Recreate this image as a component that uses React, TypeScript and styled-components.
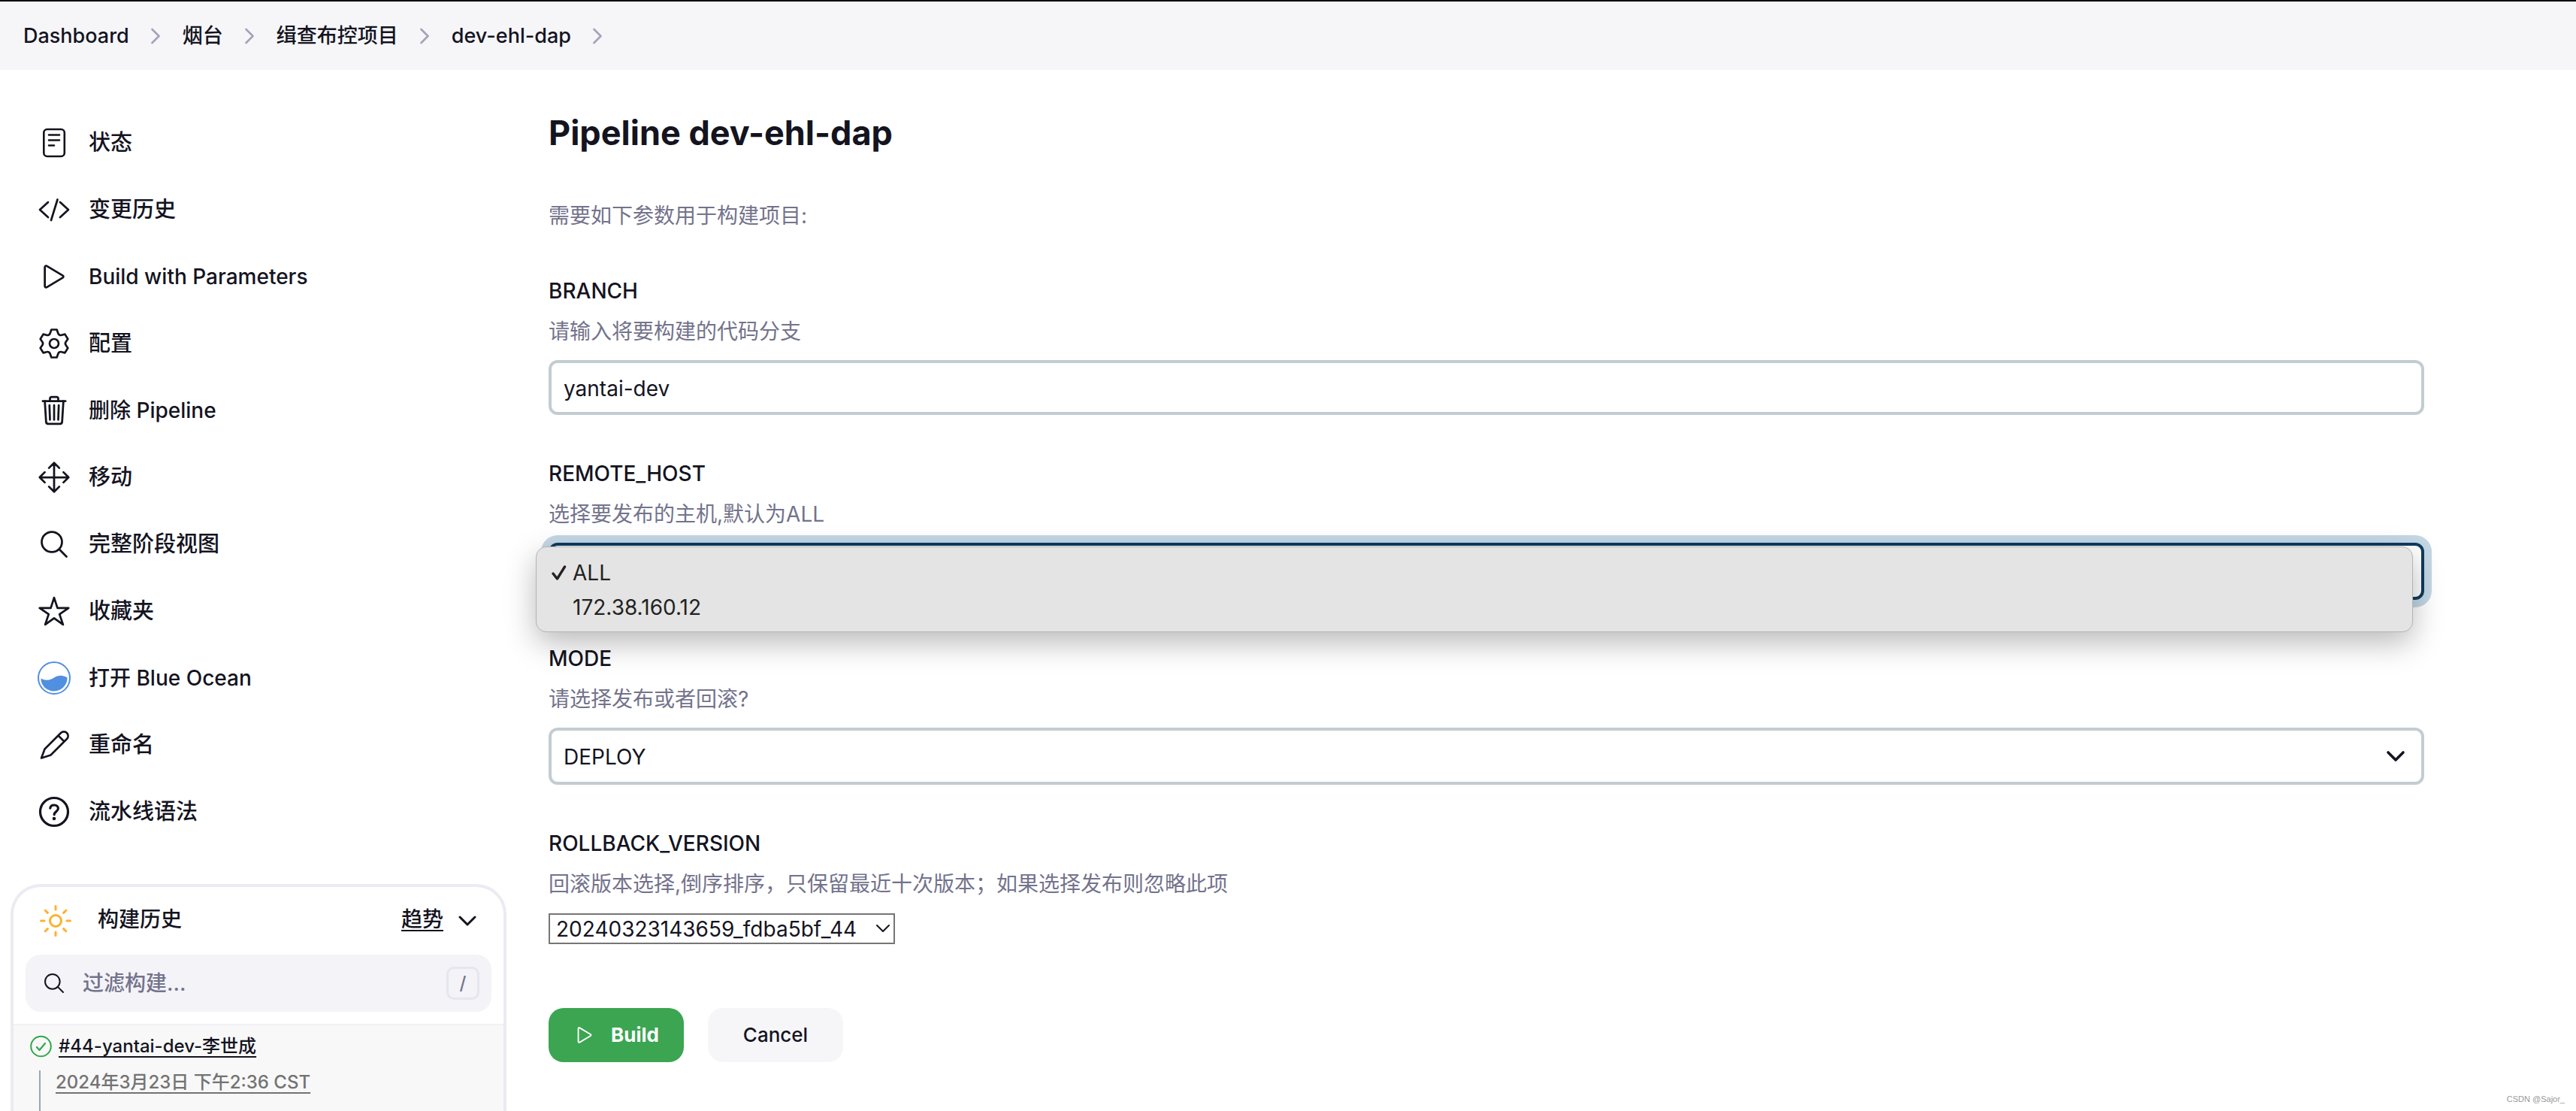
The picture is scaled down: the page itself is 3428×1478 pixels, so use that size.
import React, { useState } from 'react';
import styled, { createGlobalStyle } from 'styled-components';
import {
  IoPlayOutline,
  IoTrashOutline,
  IoMoveOutline,
  IoSearchOutline,
  IoStarOutline,
  IoSunnyOutline,
} from 'react-icons/io5';

const ink = '#14141f';
const muted = '#73738c';
const fontStack = '"Inter", "Noto Sans CJK SC", sans-serif';

const GlobalStyle = createGlobalStyle`
  *, *::before, *::after { box-sizing: border-box; }
  body {
    margin: 0;
    background: #fff;
    color: ${ink};
    font-family: ${fontStack};
    font-size: 28px;
    line-height: 40px;
  }
  button, input, select { font: inherit; color: inherit; }
  a { color: inherit; }
`;

const Page = styled.div`
  display: flex;
  flex-direction: column;
  min-height: 100vh;
  border-top: 2px solid #000;
`;

const Breadcrumbs = styled.nav`
  background: #f6f6f9;
  padding: 0 31px;
`;

const CrumbList = styled.ol`
  display: flex;
  align-items: center;
  gap: 30px;
  height: 91px;
  margin: 0;
  padding: 0;
  list-style: none;
`;

const Crumb = styled.li`
  display: flex;
  align-items: center;
  gap: 29px;
`;

const CrumbLink = styled.a`
  font-size: 27px;
  font-weight: 500;
  text-decoration: none;
`;

const Body = styled.div`
  display: flex;
  flex: 1;
`;

const Sidebar = styled.aside`
  display: flex;
  flex-direction: column;
  flex: none;
  width: 674px;
  padding: 52px 0 0 14px;
`;

const TaskList = styled.ul`
  margin: 0 0 52px;
  padding: 0;
  list-style: none;
`;

const TaskLink = styled.a<{ $latin: boolean }>`
  display: flex;
  align-items: center;
  gap: 24px;
  height: 89px;
  padding-left: 36px;
  font-size: ${(p) => (p.$latin ? 28 : 29)}px;
  font-weight: 500;
  text-decoration: none;

  svg { flex: none; width: 44px; height: 44px; }
`;

const History = styled.section`
  display: flex;
  flex-direction: column;
  flex: 1;
  border: 4px solid #ebebf3;
  border-bottom: 0;
  border-radius: 40px 40px 0 0;
  overflow: hidden;
`;

const HistoryHead = styled.header`
  display: flex;
  align-items: center;
  height: 90px;
  padding: 0 36px 0 32px;

  > svg:first-child { margin-right: 32px; }
`;

const HistoryTitle = styled.h2`
  flex: 1;
  margin: 0;
  padding-bottom: 4px;
  font-size: 28px;
  font-weight: 500;
`;

const TrendLink = styled.a`
  margin-right: 20px;
  padding-bottom: 4px;
  font-weight: 500;
  text-decoration-thickness: 2px;
  text-underline-offset: 4px;
`;

const IconButton = styled.button`
  display: flex;
  padding: 0;
  border: 0;
  background: none;
`;

const SearchBox = styled.label`
  display: flex;
  align-items: center;
  gap: 22px;
  height: 76px;
  margin: 0 16px 16px;
  padding: 0 16px 0 22px;
  border-radius: 20px;
  background: #f3f3f8;

  svg { flex: none; }
`;

const SearchInput = styled.input`
  flex: 1;
  min-width: 0;
  padding: 0;
  border: 0;
  outline: 0;
  background: none;
  font-weight: 500;

  &::placeholder { color: ${muted}; opacity: 1; }
`;

const Key = styled.kbd`
  display: flex;
  align-items: center;
  justify-content: center;
  width: 44px;
  height: 44px;
  border: 3px solid #e6e6ef;
  border-radius: 10px;
  color: ${muted};
  font-family: ${fontStack};
  font-size: 24px;
  font-weight: 500;
`;

const Builds = styled.div`
  display: flex;
  flex-direction: column;
  flex: 1;
  padding: 12px 22px 0;
  border-top: 2px solid #f1f1f6;
  background: #f8f8f8;
  font-size: 24px;
`;

const BuildRow = styled.div`
  display: flex;
  align-items: center;
  gap: 8px;
  height: 32px;
`;

const BuildLink = styled.a<{ $muted?: boolean }>`
  color: ${(p) => (p.$muted ? '#737373' : ink)};
  font-weight: 500;
  line-height: 32px;
  text-decoration-thickness: 2px;
  text-underline-offset: 5px;
`;

const BuildDetails = styled.div`
  flex: 1;
  margin: 16px 0 0 12px;
  padding: 0 0 12px 20px;
  border-left: 2px solid #98a6b0;
  line-height: 24px;
`;

const Main = styled.main`
  flex: 1;
  min-width: 0;
  padding: 54px 202px 0 56px;
`;

const Title = styled.h1`
  margin: 0 0 60px;
  font-size: 45px;
  font-weight: 700;
  line-height: 60px;
`;

const Hint = styled.p`
  margin: 0;
  color: ${muted};
`;

const Form = styled.form`
  padding-top: 60px;
`;

const Field = styled.div`
  margin-bottom: 58px;
`;

const FieldLabel = styled.label`
  display: block;
  margin-bottom: 14px;
  font-weight: 500;
`;

const TextInput = styled.input`
  display: block;
  width: 100%;
  height: 73px;
  margin-top: 18px;
  padding: 2px 16px 0;
  border: 4px solid #c3ccd1;
  border-radius: 12px;
  background: #fff;
`;

const SelectWrap = styled.div`
  position: relative;
  margin-top: 18px;
`;

const Select = styled.select<{ $open?: boolean }>`
  display: block;
  appearance: none;
  width: 100%;
  height: 76px;
  padding: 2px 60px 0 16px;
  border: 4px solid ${(p) => (p.$open ? '#0d3c5f' : '#c3ccd1')};
  border-radius: 12px;
  outline: 0;
  background: #fff;
  box-shadow: ${(p) => (p.$open ? '0 0 0 10px #c4d7e5' : 'none')};
`;

const SelectArrow = styled.svg`
  position: absolute;
  top: 50%;
  right: 24px;
  transform: translateY(-50%);
  pointer-events: none;
`;

const Menu = styled.ul`
  position: absolute;
  z-index: 1;
  top: 5px;
  left: -17px;
  right: 15px;
  margin: 0;
  padding: 11px 18px 9px;
  border: 1px solid #b4b4b4;
  border-radius: 14px;
  background: #e4e4e4;
  box-shadow: 0 14px 40px rgba(0, 0, 0, 0.28);
  color: #222;
  list-style: none;
`;

const MenuItem = styled.li`
  display: flex;
  align-items: center;
  gap: 6px;
  height: 46px;

  svg { width: 24px; height: 24px; }
`;

const CompactWrap = styled.div`
  position: relative;
  width: max-content;
  margin-top: 19px;
`;

const CompactSelect = styled.select`
  display: block;
  appearance: none;
  height: 41px;
  padding: 0 48px 0 8px;
  border: 2px solid #767676;
  border-radius: 0;
  background: #fff;
  line-height: 36px;
`;

const CompactArrow = styled.svg`
  position: absolute;
  top: 14px;
  right: 6px;
  pointer-events: none;
`;

const Actions = styled.div`
  display: flex;
  gap: 32px;
  margin-top: 85px;
`;

const Button = styled.button<{ $primary?: boolean }>`
  display: flex;
  align-items: center;
  justify-content: center;
  gap: 20px;
  width: 180px;
  height: 72px;
  padding: 0;
  border: 0;
  border-radius: 20px;
  background: ${(p) => (p.$primary ? '#3ba551' : '#f6f6f9')};
  color: ${(p) => (p.$primary ? '#fff' : ink)};
  font-size: 26px;
  font-weight: ${(p) => (p.$primary ? 700 : 500)};
`;

const Watermark = styled.small`
  position: absolute;
  right: 15px;
  bottom: 8px;
  color: #999;
  font-family: "Liberation Sans", sans-serif;
  font-size: 11px;
  line-height: 16px;
`;

const stroke = {
  fill: 'none',
  stroke: 'currentColor',
  strokeLinecap: 'round' as const,
  strokeLinejoin: 'round' as const,
};

const DocumentIcon = () => (
  <svg viewBox="0 0 44 44" {...stroke} strokeWidth="2.600">
    <rect x="8.300" y="4" width="27.500" height="36" rx="4.500" />
    <path d="M15 11.500h14M15 18.500h14M15 25.500h7" />
  </svg>
);

const CodeIcon = () => (
  <svg viewBox="0 0 44 44" {...stroke} strokeWidth="2.700">
    <path d="M14 12L3 22L14 32M30 12L41 22L30 32M26.500 8.500L18 36" />
  </svg>
);

const GearIcon = () => (
  <svg viewBox="0 0 44 44" {...stroke} strokeWidth="2.700">
    <circle cx="22" cy="22" r="6" />
    <path d="M18.400 3.500h7.200l1.700 4.700a3.600 3.600 0 0 0 4.700 2.600l4.400-1.200 3.900 6.400-2.600 3.700a4 4 0 0 0 0 4.600l2.600 3.700-3.900 6.400-4.400-1.200a3.600 3.600 0 0 0-4.700 2.600l-1.700 4.700h-7.200l-1.700-4.700a3.600 3.600 0 0 0-4.700-2.600l-4.400 1.200-3.900-6.400 2.600-3.700a4 4 0 0 0 0-4.600l-2.600-3.700 3.900-6.400 4.400 1.200a3.600 3.600 0 0 0 4.700-2.600z" />
  </svg>
);

const OceanIcon = () => (
  <svg viewBox="0 0 44 44" fill="none">
    <circle cx="22" cy="22" r="21" stroke="#5190e0" strokeWidth="2" />
    <path fill="#5190e0" d="M4.500 22.500C11 26 17 25 22 21.500C28 17.500 34 18 39.500 21.500C40 31 32 39.500 22 39.500S4 31.500 4.500 22.500Z" />
  </svg>
);

const PencilIcon = () => (
  <svg viewBox="0 0 44 44" {...stroke} strokeWidth="2.600">
    <path d="M5 39.500l4.500-12L31 6a5.600 5.600 0 0 1 8 8L17.500 35.500zM27.500 9.500l7.500 7.500" />
  </svg>
);

const HelpIcon = () => (
  <svg viewBox="0 0 44 44" {...stroke} strokeWidth="3.200">
    <circle cx="22" cy="22" r="18.500" />
    <path d="M16.800 17.200c.3-3 2.600-4.200 5.300-4.200 3 0 5.300 1.800 5.300 4.500 0 4.200-5.200 4.400-5.200 7.800v.4" />
    <circle cx="22" cy="31" r="2.300" fill="currentColor" stroke="none" />
  </svg>
);

const CrumbArrow = () => (
  <svg width="12" height="22" viewBox="0 0 12 22" {...stroke} stroke="#a3a3bb" strokeWidth="2.600">
    <path d="M1.500 2L10.500 11L1.500 20" />
  </svg>
);

const CheckCircle = () => (
  <svg width="30" height="30" viewBox="0 0 30 30" {...stroke} stroke="#30a84b" strokeWidth="2">
    <circle cx="14.500" cy="15" r="13.300" />
    <path d="M9 16l3.500 4L20 11" strokeWidth="2.200" />
  </svg>
);

const crumbs = ['Dashboard', '烟台', '缉查布控项目', 'dev-ehl-dap'];

const tasks: { label: string; icon: React.ReactNode }[] = [
  { label: '状态', icon: <DocumentIcon /> },
  { label: '变更历史', icon: <CodeIcon /> },
  { label: 'Build with Parameters', icon: <IoPlayOutline /> },
  { label: '配置', icon: <GearIcon /> },
  { label: '删除 Pipeline', icon: <IoTrashOutline /> },
  { label: '移动', icon: <IoMoveOutline /> },
  { label: '完整阶段视图', icon: <IoSearchOutline /> },
  { label: '收藏夹', icon: <IoStarOutline /> },
  { label: '打开 Blue Ocean', icon: <OceanIcon /> },
  { label: '重命名', icon: <PencilIcon /> },
  { label: '流水线语法', icon: <HelpIcon /> },
];

const hosts = ['ALL', '172.38.160.12'];

export default function App() {
  const [host, setHost] = useState(hosts[0]);
  const [branch, setBranch] = useState('yantai-dev');

  return (
    <Page>
      <GlobalStyle />
      <Breadcrumbs>
        <CrumbList>
          {crumbs.map((c) => (
            <Crumb key={c}>
              <CrumbLink href="#">{c}</CrumbLink>
              <CrumbArrow />
            </Crumb>
          ))}
        </CrumbList>
      </Breadcrumbs>
      <Body>
        <Sidebar>
          <TaskList>
            {tasks.map((t) => (
              <li key={t.label}>
                <TaskLink href="#" $latin={/[a-z]/i.test(t.label)}>
                  {t.icon}
                  {t.label}
                </TaskLink>
              </li>
            ))}
          </TaskList>
          <History>
            <HistoryHead>
              <IoSunnyOutline size={48} color="#fdb12e" />
              <HistoryTitle>构建历史</HistoryTitle>
              <TrendLink href="#">趋势</TrendLink>
              <IconButton type="button" aria-label="折叠">
                <svg width="24" height="14" viewBox="0 0 24 14" {...stroke} strokeWidth="3">
                  <path d="M2 2L12 12L22 2" />
                </svg>
              </IconButton>
            </HistoryHead>
            <SearchBox>
              <IoSearchOutline size={32} />
              <SearchInput type="text" placeholder="过滤构建..." aria-label="过滤构建" />
              <Key>/</Key>
            </SearchBox>
            <Builds>
              <BuildRow>
                <CheckCircle />
                <BuildLink href="#">#44-yantai-dev-李世成</BuildLink>
              </BuildRow>
              <BuildDetails>
                <BuildLink href="#" $muted>2024年3月23日 下午2:36 CST</BuildLink>
              </BuildDetails>
            </Builds>
          </History>
        </Sidebar>
        <Main>
          <Title>Pipeline dev-ehl-dap</Title>
          <Hint>需要如下参数用于构建项目:</Hint>
          <Form onSubmit={(e) => e.preventDefault()}>
            <Field>
              <FieldLabel htmlFor="branch">BRANCH</FieldLabel>
              <Hint>请输入将要构建的代码分支</Hint>
              <TextInput id="branch" value={branch} onChange={(e) => setBranch(e.target.value)} />
            </Field>
            <Field>
              <FieldLabel htmlFor="host">REMOTE_HOST</FieldLabel>
              <Hint>选择要发布的主机,默认为ALL</Hint>
              <SelectWrap>
                <Select id="host" $open value={host} onChange={(e) => setHost(e.target.value)}>
                  {hosts.map((h) => <option key={h}>{h}</option>)}
                </Select>
                <Menu role="listbox" aria-label="REMOTE_HOST">
                  {hosts.map((h) => (
                    <MenuItem key={h} role="option" aria-selected={h === host} onClick={() => setHost(h)}>
                      <svg viewBox="0 0 24 24" {...stroke} strokeWidth="3.400">
                        {h === host && <path d="M4 13l5.500 7L19.500 4" />}
                      </svg>
                      {h}
                    </MenuItem>
                  ))}
                </Menu>
              </SelectWrap>
            </Field>
            <Field>
              <FieldLabel htmlFor="mode">MODE</FieldLabel>
              <Hint>请选择发布或者回滚?</Hint>
              <SelectWrap>
                <Select id="mode">
                  <option>DEPLOY</option>
                </Select>
                <SelectArrow width="28" height="16" viewBox="0 0 28 16" {...stroke} strokeWidth="3.600">
                  <path d="M4 3L14 13L24 3" />
                </SelectArrow>
              </SelectWrap>
            </Field>
            <Field>
              <FieldLabel htmlFor="rollback">ROLLBACK_VERSION</FieldLabel>
              <Hint>回滚版本选择,倒序排序，只保留最近十次版本；如果选择发布则忽略此项</Hint>
              <CompactWrap>
                <CompactSelect id="rollback">
                  <option>20240323143659_fdba5bf_44</option>
                </CompactSelect>
                <CompactArrow width="20" height="12" viewBox="0 0 20 12" {...stroke} strokeWidth="2">
                  <path d="M2 2L10 10L18 2" />
                </CompactArrow>
              </CompactWrap>
            </Field>
            <Actions>
              <Button type="submit" $primary>
                <IoPlayOutline size={30} />
                Build
              </Button>
              <Button type="button">Cancel</Button>
            </Actions>
          </Form>
        </Main>
      </Body>
      <Watermark>CSDN @Sajor_</Watermark>
    </Page>
  );
}
